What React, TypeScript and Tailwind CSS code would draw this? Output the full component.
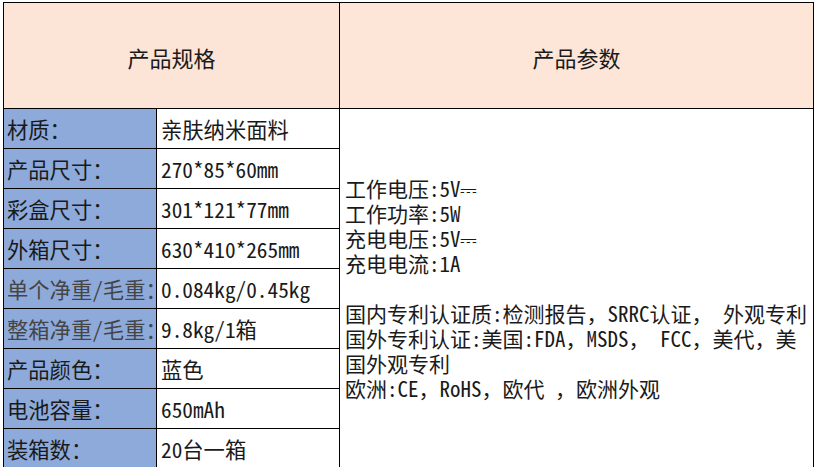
import React from "react";

const rows: { label: string; value: string; gray?: boolean }[] = [
  { label: "材质：", value: "亲肤纳米面料" },
  { label: "产品尺寸：", value: "270*85*60mm" },
  { label: "彩盒尺寸：", value: "301*121*77mm" },
  { label: "外箱尺寸：", value: "630*410*265mm" },
  { label: "单个净重/毛重：", value: "0.084kg/0.45kg", gray: true },
  { label: "整箱净重/毛重：", value: "9.8kg/1箱", gray: true },
  { label: "产品颜色：", value: "蓝色" },
  { label: "电池容量：", value: "650mAh" },
  { label: "装箱数：", value: "20台一箱" },
];

const params = [
  "工作电压:5V⎓",
  "工作功率:5W",
  "充电电压:5V⎓",
  "充电电流:1A",
  "\u00a0",
  "国内专利认证质:检测报告，SRRC认证， 外观专利",
  "国外专利认证:美国:FDA，MSDS， FCC，美代，美",
  "国外观专利",
  "欧洲:CE，RoHS，欧代 ，欧洲外观",
];

export default function App() {
  return (
    <div className="w-[815px] h-[467px] overflow-hidden bg-white pl-[3px] pt-[2px] font-['Noto_Sans_Mono_CJK_SC','Noto_Sans_CJK_SC','DejaVu_Sans',monospace] text-[#1a1a1a]">
      <div className="grid w-[811px] grid-cols-[153px_183px_474px] grid-rows-[106px_repeat(9,40px)] border-l border-t border-black">
        <div className="col-span-2 flex items-center justify-center border-b border-r border-black bg-[#fce4d6] pt-[4px] text-[22px]">
          产品规格
        </div>
        <div className="flex items-center justify-center border-b border-r border-black bg-[#fde5d8] pt-[4px] text-[22px]">
          产品参数
        </div>
        {rows.map((r, i) => (
          <React.Fragment key={i}>
            <div
              className={`col-start-1 flex items-center whitespace-nowrap border-b border-r border-black bg-[#8eaadb] pl-[3px] text-[21.3px] ${
                r.gray ? "text-[#454545]" : "text-[#1a1a1a]"
              }`}
              style={{ gridRowStart: i + 2 }}
            >
              {r.label}
            </div>
            <div
              className="col-start-2 flex items-center whitespace-nowrap border-b border-r border-black bg-white pl-[4px] text-[21.3px]"
              style={{ gridRowStart: i + 2 }}
            >
              {r.value}
            </div>
          </React.Fragment>
        ))}
        <div className="col-start-3 row-start-2 row-span-9 flex flex-col justify-center border-b border-r border-black bg-white pl-[5px] text-[21px] leading-[25px]">
          {params.map((p, i) => (
            <div key={i} className="whitespace-nowrap">
              {p}
            </div>
          ))}
        </div>
      </div>
    </div>
  );
}
